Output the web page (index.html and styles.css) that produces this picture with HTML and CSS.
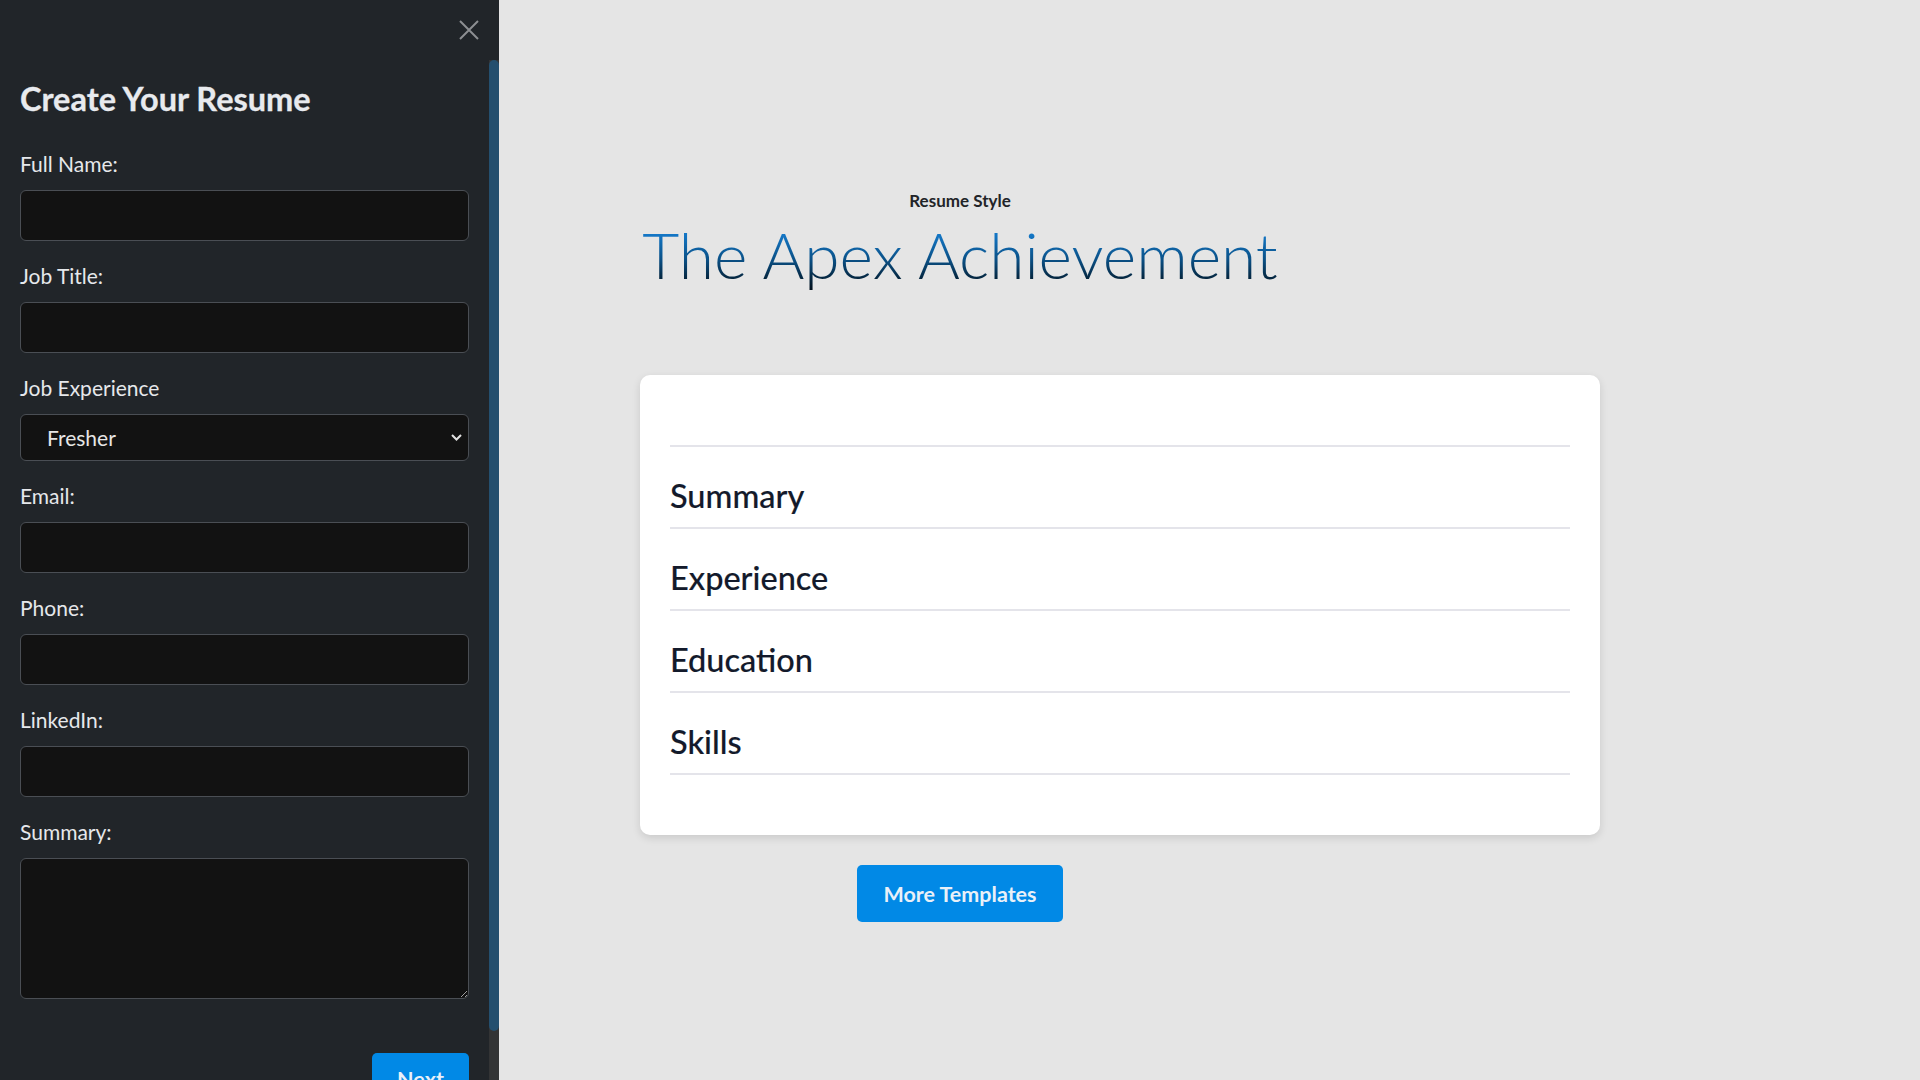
FILE: index.html
```html
<!DOCTYPE html>
<html lang="en">
<head>
<meta charset="utf-8">
<title>Create Your Resume</title>
<link rel="stylesheet" href="styles.css">
</head>
<body>
<aside class="sidebar">
  <div class="sidebar-head">
    <button class="close-btn" type="button" aria-label="Close">
      <svg width="20" height="20" viewBox="0 0 20 20"><path d="M1 1 L19 19 M19 1 L1 19" stroke="#8d8f92" stroke-width="2" fill="none"/></svg>
    </button>
  </div>
  <div class="sidebar-body">
    <form class="form">
      <h2 class="form-title">Create Your Resume</h2>
      <label class="field-label">Full Name:</label>
      <input class="field-input" type="text">
      <label class="field-label">Job Title:</label>
      <input class="field-input" type="text">
      <label class="field-label">Job Experience</label>
      <div class="select-wrap">
        <select class="field-select">
          <option>Fresher</option>
        </select>
        <svg class="chevron" width="11" height="7" viewBox="0 0 11 7"><path d="M1 1 L5.5 5.5 L10 1" stroke="#e2e2e2" stroke-width="2" fill="none"/></svg>
      </div>
      <label class="field-label">Email:</label>
      <input class="field-input" type="email">
      <label class="field-label">Phone:</label>
      <input class="field-input" type="text">
      <label class="field-label">LinkedIn:</label>
      <input class="field-input" type="text">
      <label class="field-label">Summary:</label>
      <textarea class="field-textarea"></textarea>
      <div class="form-actions">
        <button class="btn btn-next" type="button">Next</button>
      </div>
    </form>
    <div class="scrollbar"><div class="scroll-thumb"></div></div>
  </div>
</aside>
<main class="main">
  <header class="hero">
    <p class="hero-kicker">Resume Style</p>
    <h1 class="hero-title">The Apex Achievement</h1>
  </header>
  <section class="card">
    <div class="card-name"></div>
    <div class="card-section"><h3 class="section-title">Summary</h3></div>
    <div class="card-section"><h3 class="section-title">Experience</h3></div>
    <div class="card-section"><h3 class="section-title">Education</h3></div>
    <div class="card-section"><h3 class="section-title">Skills</h3></div>
  </section>
  <div class="more-row">
    <button class="btn btn-more" type="button">More Templates</button>
  </div>
</main>
</body>
</html>
```
FILE: styles.css
```css
* { box-sizing: border-box; }
html, body { height: 100%; }
body {
  margin: 0;
  display: flex;
  overflow: hidden;
  font-family: "Lato", "Noto Sans", sans-serif;
  background: #e5e5e5;
}

/* Sidebar */
.sidebar {
  width: 499px;
  flex: 0 0 499px;
  height: 1080px;
  background: #212529;
  display: flex;
  flex-direction: column;
}
.sidebar-head {
  height: 60px;
  flex: 0 0 60px;
  display: flex;
  justify-content: flex-end;
  align-items: flex-start;
  padding: 20px 20px 0 0;
}
.close-btn {
  border: 0;
  padding: 0;
  background: none;
  width: 20px;
  height: 20px;
  display: block;
}
.close-btn svg { display: block; }
.sidebar-body {
  flex: 1;
  min-height: 0;
  display: flex;
}
.form {
  flex: 1;
  min-width: 0;
  padding: 20px 20px 0 20px;
  overflow: hidden;
  display: flex;
  flex-direction: column;
}
.form-title {
  margin: 0 0 34px;
  font-size: 32.5px;
  line-height: 37px;
  font-weight: 700;
  color: #e8eaee;
  -webkit-text-stroke: 0.3px #e8eaee;
}
.field-label {
  display: block;
  font-size: 21px;
  line-height: 25px;
  color: #e6e8eb;
  margin-bottom: 14px;
}
.field-input,
.field-select,
.field-textarea {
  width: 100%;
  background: #121212;
  border: 1px solid #4a4e54;
  border-radius: 6px;
  color: #e6e6e6;
  font-family: inherit;
  outline: none;
}
.field-input {
  height: 51px;
  margin: 0 0 22px;
  flex: 0 0 51px;
}
.select-wrap {
  position: relative;
  margin-bottom: 22px;
  flex: 0 0 47px;
}
.field-select {
  height: 47px;
  appearance: none;
  -webkit-appearance: none;
  padding: 0 0 0 26px;
  font-size: 21px;
  display: block;
}
.chevron {
  position: absolute;
  right: 7px;
  top: 20px;
}
.field-textarea {
  height: 141px;
  flex: 0 0 141px;
  margin: 0;
  resize: vertical;
  color-scheme: dark;
}
.form-actions {
  display: flex;
  justify-content: flex-end;
  margin-top: 54px;
}
.btn {
  border: 0;
  border-radius: 5px;
  background: #0189e6;
  color: #e9f0f8;
  font-family: inherit;
  font-weight: 700;
  font-size: 21.5px;
  cursor: pointer;
}
.btn-next {
  width: 97px;
  height: 52px;
  padding: 0;
}
.scrollbar {
  width: 10px;
  flex: 0 0 10px;
  background: #333435;
  display: flex;
  flex-direction: column;
}
.scroll-thumb {
  height: 971px;
  background: #244f6e;
  border-radius: 5px;
}

/* Main */
.main {
  flex: 1;
  min-width: 0;
  padding-top: 191px;
}
.hero {
  width: 922px;
  text-align: center;
}
.hero-kicker {
  margin: 0;
  font-size: 17px;
  line-height: 20px;
  font-weight: 700;
  color: #222428;
}
.hero-title {
  margin: 7px 0 0;
  font-size: 64px;
  line-height: 74px;
  font-weight: 300;
  background: linear-gradient(to bottom, #1477c6 22%, #0b5289 55%, #05263f 82%, #020c16 100%);
  -webkit-background-clip: text;
  background-clip: text;
  color: transparent;
  display: inline-block;
}
.card {
  width: 960px;
  margin: 83px 0 0 141px;
  background: #fff;
  border-radius: 10px;
  box-shadow: 0 3px 8px rgba(0, 0, 0, 0.12);
  padding: 30px 30px 60px;
}
.card-name {
  height: 42px;
  border-bottom: 2px solid #e4e4ea;
}
.card-section {
  height: 82px;
  padding: 30px 0 13px;
  border-bottom: 2px solid #e4e4ea;
}
.section-title {
  margin: 0;
  font-size: 32.5px;
  line-height: 37px;
  font-weight: 500;
  color: #131a2b;
  -webkit-text-stroke: 0.15px #131a2b;
}
.more-row {
  width: 640px;
  margin: 30px 0 0 141px;
  text-align: center;
}
.btn-more {
  width: 206px;
  height: 57px;
}
```
